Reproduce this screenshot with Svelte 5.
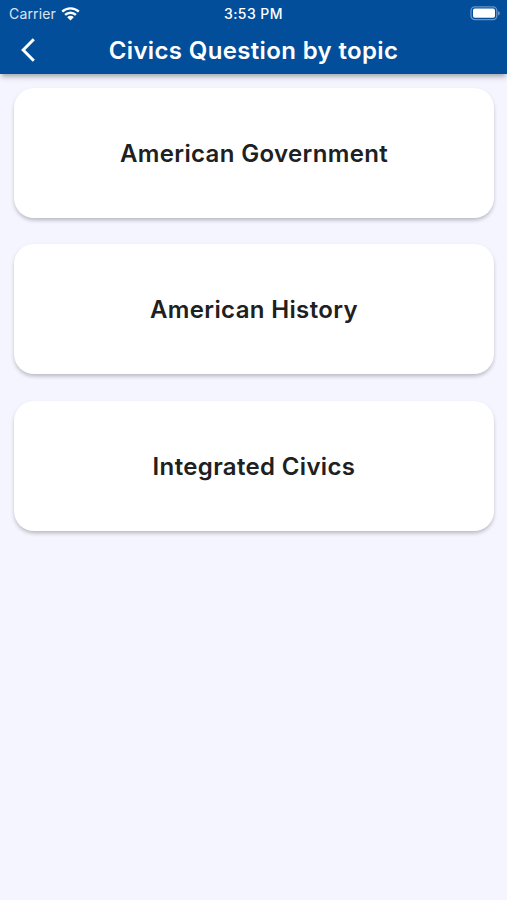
<script>
    // Temas de la lista, en orden de aparición
    const topics = [
        { id: "government", title: "American Government" },
        { id: "history", title: "American History" },
        { id: "integrated", title: "Integrated Civics" },
    ];
</script>

<div class="screen">
    <header class="app-header">
        <div class="status-bar">
            <div class="carrier">
                <span class="carrier-name">Carrier</span>
                <svg class="wifi" width="19" height="14" viewBox="0 0 19 14" aria-hidden="true">
                    <path class="arc" d="M1.2 4.7a12 12 0 0 1 16.6 0" />
                    <path class="arc" d="M4.1 7.9a7.8 7.8 0 0 1 10.8 0" />
                    <path class="dot" d="M9.5 13.4 6.2 10.2a4.7 4.7 0 0 1 6.6 0z" />
                </svg>
            </div>
            <span class="time">3:53 PM</span>
            <svg class="battery" width="31" height="15" viewBox="0 0 31 15" aria-hidden="true">
                <rect class="shell" x="1" y="0.8" width="25.8" height="12.8" rx="3.8" />
                <rect class="level" x="3" y="2.6" width="22" height="9.2" rx="1.8" />
                <path class="tip" d="M28.2 5v4.6a2.5 2.5 0 0 0 0-4.6z" />
            </svg>
        </div>
        <div class="nav-bar">
            <button class="back" aria-label="Back">
                <svg width="15" height="24" viewBox="0 0 15 24" aria-hidden="true">
                    <path d="M12.8 1.2 2.2 12l10.6 10.8" />
                </svg>
            </button>
            <h1>Civics Question by topic</h1>
        </div>
    </header>

    <main class="topic-list">
        {#each topics as topic (topic.id)}
            <button class="topic-card">{topic.title}</button>
        {/each}
    </main>
</div>

<style>
    :global(body) {
        background: #f4f5ff;
    }

    .screen {
        min-height: 100vh;
        font-family: Inter, Roboto, sans-serif;
        background: #f4f5ff;
    }

    .app-header {
        height: 74px;
        color: #fff;
        background: #024e9b;
        box-shadow:
            0 4px 4px -2px rgba(0, 0, 0, 0.22),
            0 4px 6px rgba(0, 0, 0, 0.13);
    }

    .status-bar {
        display: grid;
        grid-template-columns: 1fr auto 1fr;
        align-items: center;
        height: 27px;
        padding: 0 7px 0 9px;
        font-size: 14px;
    }

    .carrier {
        display: flex;
        align-items: center;
        gap: 5px;
        margin-right: 3px;
    }

    .carrier-name {
        letter-spacing: 0.15px;
        opacity: 0.85;
    }

    .arc {
        fill: none;
        stroke: #fff;
        stroke-width: 2.4;
    }

    .dot,
    .level {
        fill: #fff;
    }

    .time {
        margin-right: 2px;
        font-size: 14px;
        font-weight: 500;
        letter-spacing: 0.45px;
    }

    .battery {
        justify-self: end;
        margin-right: -1px;
    }

    .shell {
        fill: none;
        stroke: #fff;
        stroke-width: 1.3;
        stroke-opacity: 0.4;
    }

    .tip {
        fill: #fff;
        fill-opacity: 0.5;
    }

    .nav-bar {
        display: grid;
        grid-template-columns: 56px 1fr 56px;
        align-items: center;
        height: 47px;
    }

    .back {
        display: flex;
        justify-content: center;
        padding: 0 0 2px;
        border: 0;
        background: none;
    }

    .back path {
        fill: none;
        stroke: #fff;
        stroke-width: 3;
    }

    h1 {
        margin: 0;
        font-size: 24px;
        font-weight: 600;
        line-height: 28px;
        letter-spacing: 0.35px;
        text-align: center;
        white-space: nowrap;
    }

    .topic-list {
        display: grid;
        gap: 26.4px;
        padding: 13.9px 13px 14px 14px;
    }

    .topic-card {
        height: 130px;
        padding: 2px 0 0;
        border: 0;
        border-radius: 20px;
        color: #202020;
        background: #fff;
        font: 600 24px/28px Inter, Roboto, sans-serif;
        letter-spacing: 0.35px;
        box-shadow:
            0 3px 4px -1px rgba(0, 0, 0, 0.2),
            0 2px 5px rgba(0, 0, 0, 0.08);
    }
</style>
